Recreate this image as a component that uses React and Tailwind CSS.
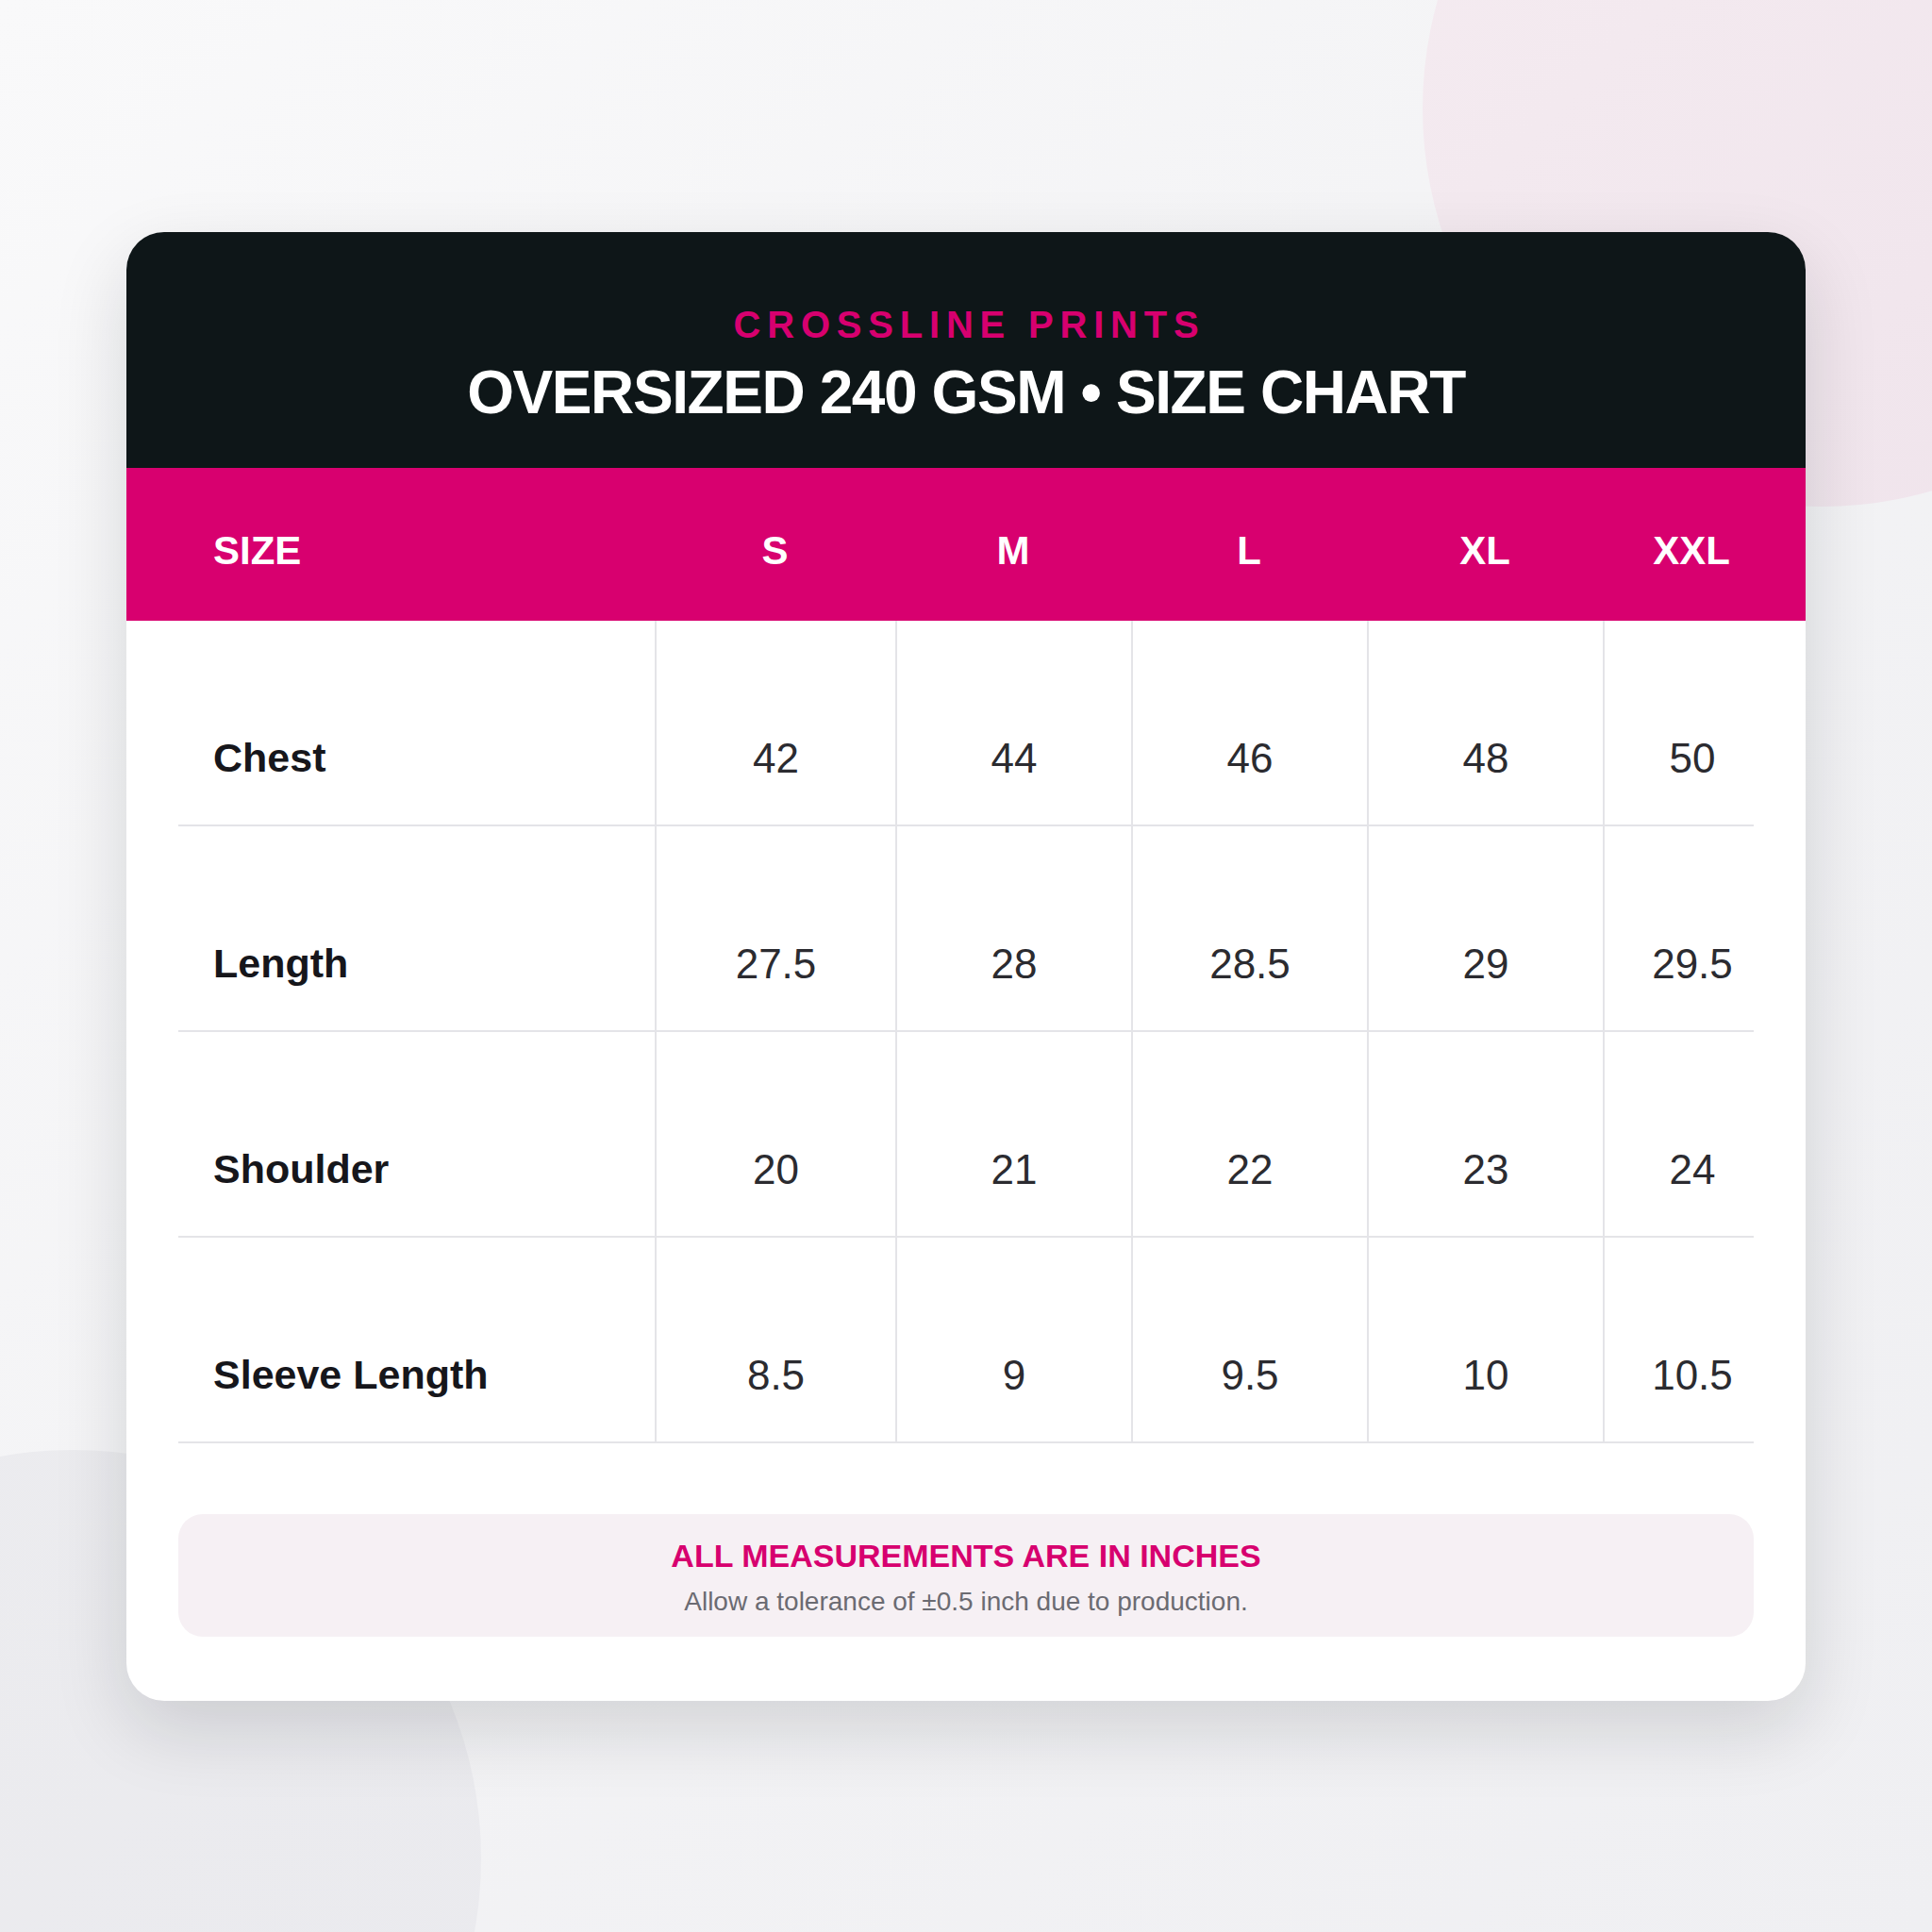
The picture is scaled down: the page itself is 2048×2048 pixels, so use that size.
import React from "react";

const sizes = ["S", "M", "L", "XL", "XXL"];
const rows = [
  { label: "Chest", values: ["42", "44", "46", "48", "50"] },
  { label: "Length", values: ["27.5", "28", "28.5", "29", "29.5"] },
  { label: "Shoulder", values: ["20", "21", "22", "23", "24"] },
  { label: "Sleeve Length", values: ["8.5", "9", "9.5", "10", "10.5"] },
];

const grid = "grid grid-cols-[505px_255px_250px_250px_250px_160px]";

export default function App() {
  return (
    <div
      className="relative w-[2048px] h-[2048px] overflow-hidden flex items-center justify-center bg-[linear-gradient(135deg,#f9f9fa_0%,#f3f3f5_50%,#efeff2_100%)]"
      style={{ fontFamily: '"Liberation Sans", Arial, Helvetica, sans-serif' }}
    >
      <div className="absolute left-[1508px] top-[-307px] w-[844px] h-[844px] rounded-full bg-[linear-gradient(135deg,#f5ecf1,#efe3eb)]" />
      <div className="absolute left-[-356px] top-[1537px] w-[866px] h-[866px] rounded-full bg-[linear-gradient(135deg,#ececef,#eaeaee)]" />

      <div className="relative w-[1780px] rounded-[40px] overflow-hidden bg-white shadow-[0_30px_80px_rgba(15,20,30,0.14)]">
        {/* Dark header */}
        <div className="bg-[#0e1618] pt-[78px] pb-[48px] text-center">
          <div className="text-[40px] leading-[40px] font-bold tracking-[0.17em] pl-[7px] text-[#d7006f]">
            CROSSLINE PRINTS
          </div>
          <div className="mt-[20px] text-[64px] leading-[64px] font-bold tracking-[-0.022em] text-white">
            OVERSIZED 240 GSM • SIZE CHART
          </div>
        </div>

        {/* Pink header row */}
        <div className="bg-[#d8006f] px-[55px] h-[162px]">
          <div className={grid}>
            <div className="pt-[67px] pl-[37px] text-[42px] leading-[42px] font-bold text-white">SIZE</div>
            {sizes.map((s, i) => (
              <div
                key={s}
                className={
                  "pt-[67px] text-center text-[42px] leading-[42px] font-bold text-white " +
                  (i === 4 ? "pl-[28px]" : "")
                }
              >
                {s}
              </div>
            ))}
          </div>
        </div>

        {/* Body */}
        <div className="px-[55px]">
          {rows.map((r) => (
            <div key={r.label} className={grid + " h-[218px] border-b-2 border-[#e4e4e8]"}>
              <div className="pt-[124px] pl-[37px] text-[43px] leading-[43px] font-bold text-[#16161b]">
                {r.label}
              </div>
              {r.values.map((v, i) => (
                <div
                  key={i}
                  className={
                    "pt-[124px] border-l-2 border-[#e4e4e8] text-center text-[44px] leading-[44px] text-[#2b2b30] " +
                    (i === 4 ? "pl-[28px]" : "")
                  }
                >
                  {v}
                </div>
              ))}
            </div>
          ))}

          {/* Footer note */}
          <div className="mt-[75px] mb-[68px] rounded-[26px] bg-[#f6f0f4] pt-[27px] pb-[23px] text-center">
            <div className="text-[34px] leading-[34px] font-bold text-[#d7006f]">
              ALL MEASUREMENTS ARE IN INCHES
            </div>
            <div className="mt-[18px] text-[28px] leading-[28px] text-[#6b6b72]">
              Allow a tolerance of ±0.5 inch due to production.
            </div>
          </div>
        </div>
      </div>
    </div>
  );
}
